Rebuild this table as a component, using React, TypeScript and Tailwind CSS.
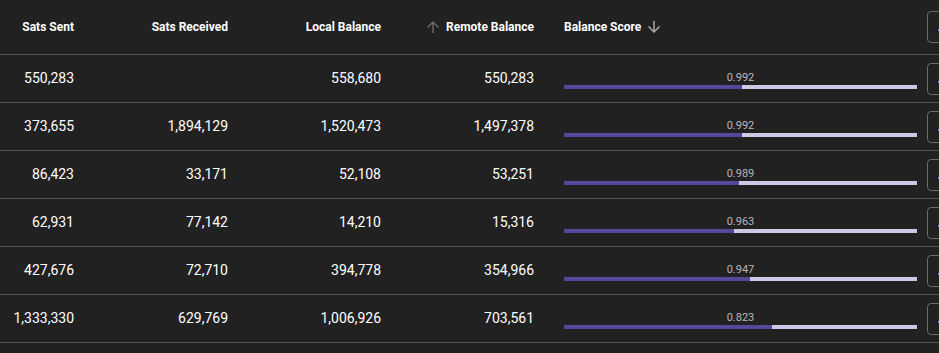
const rows = [
  { sent: "550,283", received: "", local: 558680, remote: 550283, score: "0.992" },
  { sent: "373,655", received: "1,894,129", local: 1520473, remote: 1497378, score: "0.992" },
  { sent: "86,423", received: "33,171", local: 52108, remote: 53251, score: "0.989" },
  { sent: "62,931", received: "77,142", local: 14210, remote: 15316, score: "0.963" },
  { sent: "427,676", received: "72,710", local: 394778, remote: 354966, score: "0.947" },
  { sent: "1,333,330", received: "629,769", local: 1006926, remote: 703561, score: "0.823" },
];

const fmt = (n: number) => n.toLocaleString("en-US");

function Arrow({ up, className }: { up?: boolean; className: string }) {
  return (
    <svg viewBox="0 0 24 24" className={`w-[18px] h-[18px] shrink-0 ${className}`} fill="currentColor">
      <path
        d="M20 12l-1.41-1.41L13 16.17V4h-2v12.17l-5.58-5.59L4 12l8 8 8-8z"
        transform={up ? "rotate(180 12 12)" : undefined}
      />
    </svg>
  );
}

// only the left edge of these buttons is on screen
function ActionButton() {
  return (
    <button className="flex h-8 w-[90px] items-center rounded border border-[#6b6b6b] pl-[10px]">
      <svg viewBox="0 0 18 18" className="w-[18px] h-[18px] text-[#2196f3]" fill="currentColor">
        <rect x="0" y="11" width="2" height="2" />
        <rect x="4" y="7" width="10" height="2" />
      </svg>
    </button>
  );
}

const cols = "grid grid-cols-[90px_154px_153px_153px_377px_1fr]";

export default function App() {
  return (
    <div
      className="w-[939px] h-[353px] overflow-hidden bg-[#212121] text-white"
      style={{ fontFamily: "Roboto, 'Liberation Sans', sans-serif" }}
    >
      <div className={`${cols} h-[55px] border-b border-[#515151] text-[12px] font-bold`}>
        <div className="flex items-center justify-end pr-4">Sats Sent</div>
        <div className="flex items-center justify-end pr-4">Sats Received</div>
        <div className="flex items-center justify-end pr-4">Local Balance</div>
        <div className="flex items-center justify-end pr-4">
          <Arrow up className="mr-1 text-[#6a6a6a]" />
          Remote Balance
        </div>
        <div className="flex items-center pl-[14px]">
          Balance Score
          <Arrow className="ml-1 text-[#a8a8a8]" />
        </div>
        <div className="flex items-center">
          <ActionButton />
        </div>
      </div>
      {rows.map((r, i) => {
        const pct = (r.local / (r.local + r.remote)) * 100;
        return (
          <div key={i} className={`${cols} h-[48px] border-b border-[#515151] text-[14px]`}>
            <div className="flex items-center justify-end pr-4">{r.sent}</div>
            <div className="flex items-center justify-end pr-4">{r.received}</div>
            <div className="flex items-center justify-end pr-4">{fmt(r.local)}</div>
            <div className="flex items-center justify-end pr-4">{fmt(r.remote)}</div>
            <div className="flex items-center pl-[14px]">
              <div className="w-[353px] pt-[3px]">
                <div className="text-center text-[11px] leading-[14px] text-[#b8b8b8]">{r.score}</div>
                <div className="flex h-1 w-full bg-[#cdc6e4]">
                  <div className="h-full bg-[#56479b]" style={{ width: `${pct}%` }} />
                </div>
              </div>
            </div>
            <div className="flex items-center">
              <ActionButton />
            </div>
          </div>
        );
      })}
    </div>
  );
}
